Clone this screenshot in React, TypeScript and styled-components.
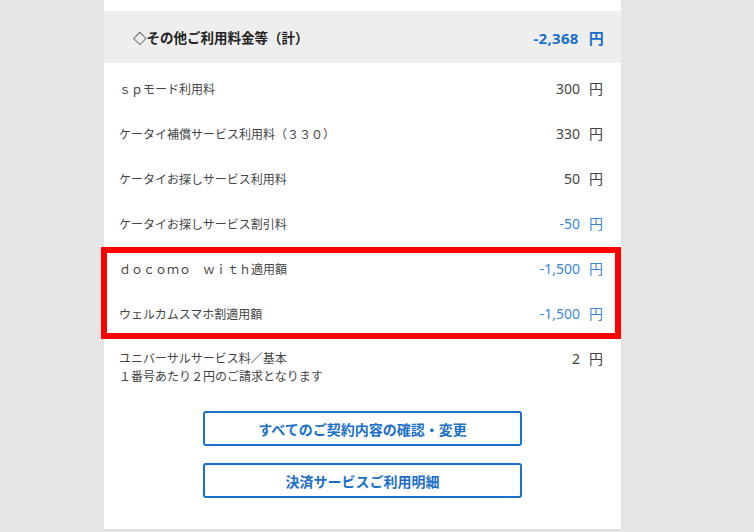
import React from "react";
import styled, { createGlobalStyle } from "styled-components";

const Global = createGlobalStyle`
  html, body {
    margin: 0;
    padding: 0;
    background: #e5e5e5;
  }
  body {
    font-family: "Noto Sans CJK JP", "Noto Sans", sans-serif;
    color: #333;
  }
`;

const Page = styled.div`
  width: 754px;
  height: 532px;
  overflow: hidden;
  background: #e5e5e5;
`;

const Panel = styled.div`
  position: relative;
  margin-left: 104px;
  width: 517px;
  height: 530px;
  box-sizing: border-box;
  background: #fff;
  padding-top: 11px;
  border-bottom: 1px solid #dcdcdc;
`;

const Header = styled.div`
  height: 52px;
  background: #eeeeee;
  display: flex;
  align-items: center;
  justify-content: space-between;
  padding: 0 17px 0 29px;
  font-size: 13.5px;
  font-weight: bold;
  color: #222;
`;

const HeaderValue = styled.span`
  color: #1a6fc9;
  font-family: "Noto Sans", "Noto Sans CJK JP", sans-serif;
  font-size: 15px;
  font-weight: bold;
  letter-spacing: 0.3px;
  display: flex;
  align-items: baseline;
`;

const Yen = styled.span<{ $gap?: number }>`
  font-family: "Noto Sans CJK JP", sans-serif;
  margin-left: ${(p) => p.$gap ?? 9}px;
`;

const List = styled.div`
  padding-top: 3px;
`;

const Row = styled.div<{ $tall?: boolean }>`
  height: ${(p) => (p.$tall ? "auto" : "45px")};
  display: flex;
  align-items: ${(p) => (p.$tall ? "flex-start" : "center")};
  justify-content: space-between;
  padding: ${(p) => (p.$tall ? "13px 18px 0 15px" : "0 18px 0 15px")};
`;

const Label = styled.div`
  font-size: 12px;
  line-height: 18px;
  color: #444;
`;

const Value = styled.span<{ $minus?: boolean }>`
  font-family: "Noto Sans", "Noto Sans CJK JP", sans-serif;
  font-size: 14px;
  line-height: 18px;
  color: ${(p) => (p.$minus ? "#3b87d6" : "#444")};
  display: flex;
  align-items: baseline;
`;

const Highlight = styled.div`
  position: absolute;
  left: -3px;
  top: 247px;
  width: 520px;
  height: 92px;
  box-sizing: border-box;
  border: 6px solid #ff0000;
  pointer-events: none;
`;

const Buttons = styled.div`
  display: flex;
  flex-direction: column;
  align-items: center;
  gap: 17px;
  padding-top: 26px;
`;

const Button = styled.button`
  width: 319px;
  height: 35px;
  box-sizing: border-box;
  background: #fff;
  border: 2px solid #1b70c9;
  border-radius: 3px;
  color: #1b6fc8;
  font-family: "Noto Sans CJK JP", "Noto Sans", sans-serif;
  font-size: 14px;
  font-weight: bold;
  cursor: pointer;
  padding: 0;
`;

const rows: { label: string; value: string; minus?: boolean }[] = [
  { label: "ｓｐモード利用料", value: "300" },
  { label: "ケータイ補償サービス利用料（３３０）", value: "330" },
  { label: "ケータイお探しサービス利用料", value: "50" },
  { label: "ケータイお探しサービス割引料", value: "-50", minus: true },
  { label: "ｄｏｃｏｍｏ　ｗｉｔｈ適用額", value: "-1,500", minus: true },
  { label: "ウェルカムスマホ割適用額", value: "-1,500", minus: true },
];

export default function App() {
  return (
    <Page>
      <Global />
      <Panel>
        <Header>
          <span>◇その他ご利用料金等（計）</span>
          <HeaderValue>
            -2,368<Yen $gap={10}>円</Yen>
          </HeaderValue>
        </Header>
        <List>
          {rows.map((r) => (
            <Row key={r.label}>
              <Label>{r.label}</Label>
              <Value $minus={r.minus}>
                {r.value}
                <Yen>円</Yen>
              </Value>
            </Row>
          ))}
          <Row $tall>
            <Label>
              ユニバーサルサービス料／基本
              <br />
              １番号あたり２円のご請求となります
            </Label>
            <Value>
              2<Yen>円</Yen>
            </Value>
          </Row>
        </List>
        <Buttons>
          <Button>すべてのご契約内容の確認・変更</Button>
          <Button>決済サービスご利用明細</Button>
        </Buttons>
        <Highlight />
      </Panel>
    </Page>
  );
}
